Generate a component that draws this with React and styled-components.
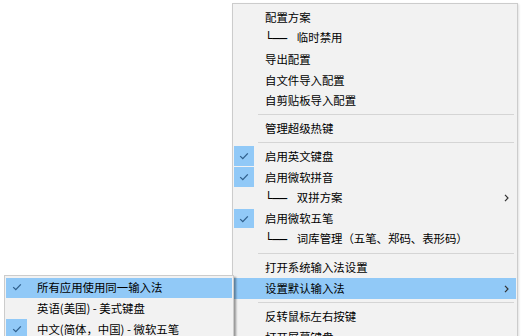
import styled, { createGlobalStyle } from "styled-components";

const GlobalStyle = createGlobalStyle`
  body {
    margin: 0;
    background: #ffffff;
    font-family: "Noto Sans CJK SC", "Noto Sans", sans-serif;
  }
`;

const Screen = styled.div`
  position: relative;
  width: 521px;
  height: 336px;
  overflow: hidden;
  background: #ffffff;
`;

const Menu = styled.ul`
  position: absolute;
  left: ${(p) => p.$left}px;
  top: ${(p) => p.$top}px;
  width: ${(p) => p.$width}px;
  box-sizing: border-box;
  margin: 0;
  padding: ${(p) => p.$padTop}px 1px 4px 1px;
  list-style: none;
  background: #f2f2f2;
  border: 1px solid #cccccc;
  box-shadow: ${(p) =>
    p.$raised ? "2px 2px 2px rgba(0, 0, 0, 0.38)" : "1px 1px 2px rgba(0, 0, 0, 0.12)"};
  z-index: ${(p) => (p.$raised ? 2 : 1)};
`;

const Item = styled.li`
  display: flex;
  align-items: center;
  height: 20.75px;
  font-size: 11.4px;
  color: #000000;
  white-space: nowrap;
  background: ${(p) => (p.$active ? "#91c9f7" : "transparent")};
`;

const Gutter = styled.span`
  display: flex;
  align-items: center;
  justify-content: center;
  flex: none;
  width: ${(p) => p.$width}px;
  height: 19.75px;
  align-self: flex-start;
  background: ${(p) => (p.$checked ? "#91c9f7" : "transparent")};
`;

const Label = styled.span`
  flex: 1;
  margin-left: ${(p) => p.$indent}px;
  line-height: 1;
`;

const Branch = styled.span`
  display: inline-block;
  margin-right: 10px;
  font-family: "DejaVu Sans", sans-serif;
  font-size: 12.6px;
  letter-spacing: -0.3px;
  vertical-align: -1px;
`;

const Arrow = styled.svg`
  flex: none;
  margin-right: 7px;
`;

const Separator = styled.li`
  height: 1px;
  margin: 3.1px 2px 3.1px 24px;
  background: #d5d5d5;
`;

function Check() {
  return (
    <svg width="10" height="8" viewBox="0 0 10 8">
      <path d="M1.2 4.1 L3.8 6.6 L8.8 1.4" fill="none" stroke="#2f5f8c" strokeWidth="1.3" />
    </svg>
  );
}

function Chevron() {
  return (
    <Arrow width="5" height="8" viewBox="0 0 5 8">
      <path d="M1 0.8 L4 4 L1 7.2" fill="none" stroke="#333333" strokeWidth="1.2" />
    </Arrow>
  );
}

const mainMenu = [
  { text: "配置方案" },
  { text: "临时禁用", branch: true },
  { text: "导出配置" },
  { text: "自文件导入配置" },
  { text: "自剪贴板导入配置" },
  { sep: true },
  { text: "管理超级热键" },
  { sep: true },
  { text: "启用英文键盘", checked: true },
  { text: "启用微软拼音", checked: true },
  { text: "双拼方案", branch: true, sub: true },
  { text: "启用微软五笔", checked: true },
  { text: "词库管理（五笔、郑码、表形码）", branch: true },
  { sep: true },
  { text: "打开系统输入法设置" },
  { text: "设置默认输入法", sub: true, active: true },
  { sep: true },
  { text: "反转鼠标左右按键" },
  { text: "打开屏幕键盘" },
];

const subMenu = [
  { text: "所有应用使用同一输入法", checked: true, active: true },
  { text: "英语(美国) - 美式键盘" },
  { text: "中文(简体，中国) - 微软五笔", checked: true },
];

function MenuRows({ rows, gutter, indent }) {
  return rows.map((row, i) =>
    row.sep ? (
      <Separator key={i} />
    ) : (
      <Item key={i} $active={row.active}>
        <Gutter $width={gutter} $checked={row.checked}>
          {row.checked && <Check />}
        </Gutter>
        <Label $indent={indent}>
          {row.branch && <Branch>└──</Branch>}
          {row.text}
        </Label>
        {row.sub && <Chevron />}
      </Item>
    )
  );
}

export default function App() {
  return (
    <Screen>
      <GlobalStyle />
      <Menu $left={232} $top={3} $width={286} $padTop={3.6}>
        <MenuRows rows={mainMenu} gutter={20} indent={11} />
      </Menu>
      <Menu $left={4} $top={275} $width={230} $padTop={1.5} $raised>
        <MenuRows rows={subMenu} gutter={21} indent={10} />
      </Menu>
    </Screen>
  );
}
